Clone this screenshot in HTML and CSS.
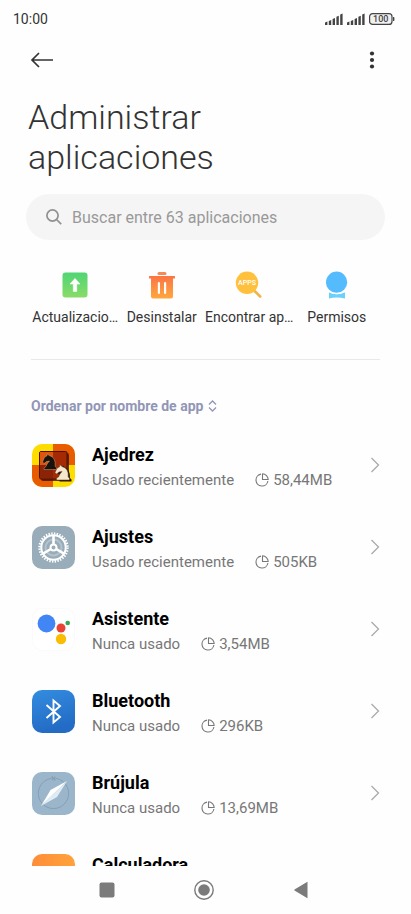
FILE: index.html
```html
<!DOCTYPE html>
<html lang="es">
<head>
<meta charset="utf-8">
<meta name="viewport" content="width=device-width, initial-scale=1">
<title>Administrar aplicaciones</title>
<link rel="stylesheet" href="styles.css">
</head>
<body>
<svg class="defs" width="0" height="0" aria-hidden="true">
  <symbol id="pie" viewBox="0 0 14 14"><path d="M6 1.1A6 6 0 1 0 12.900 8M7.500 .8V6.500H13.200A5.900 5.900 0 0 0 7.500 .8Z" fill="none" stroke="currentColor" stroke-width="1.100" stroke-linejoin="round"/></symbol>
  <symbol id="chevron" viewBox="0 0 10 16"><path d="M1.500 1L8.500 8L1.500 15" fill="none" stroke="currentColor" stroke-width="1.300"/></symbol>
  <symbol id="signal" viewBox="0 0 18 12"><path d="M0 9.500L2.400 8.500V12H0ZM3.800 8L6.200 7V12H3.800ZM7.600 6L10 5V12H7.600ZM11.400 3.800L13.800 2.800V12H11.400ZM15.200 1.400L17.600 .4V12H15.200Z" fill="#444"/></symbol>
</svg>

<header class="status">
  <span class="time">10:00</span>
  <span class="indicators">
    <svg class="signal"><use href="#signal"/></svg>
    <svg class="signal"><use href="#signal"/></svg>
    <svg class="battery" viewBox="0 0 26 12"><rect x=".6" y=".6" width="22.400" height="10.800" rx="3" fill="#f1f1f1" stroke="#444" stroke-width="1.200"/><path d="M24 4h.6q.8 0 .8 .8v2.400q0 .8-.8 .8H24Z" fill="#444"/><text x="11.800" y="9" text-anchor="middle">100</text></svg>
  </span>
</header>

<main class="page">
  <nav class="toolbar">
    <button class="tool" aria-label="Atrás"><svg width="24" height="18" viewBox="0 0 24 18"><path d="M9 2L2 9L9 16M2 9H23" fill="none" stroke="#333" stroke-width="1.700"/></svg></button>
    <button class="tool" aria-label="Más opciones"><svg width="6" height="18" viewBox="0 0 6 18" fill="#333"><circle cx="3" cy="2.500" r="2.100"/><circle cx="3" cy="9" r="2.100"/><circle cx="3" cy="15.500" r="2.100"/></svg></button>
  </nav>

  <h1 class="title">Administrar aplicaciones</h1>

  <label class="search">
    <svg width="16" height="16" viewBox="0 0 16 16" fill="none" stroke="#919191" stroke-width="1.700"><circle cx="6.500" cy="6.500" r="5.600"/><path d="M10.500 10.500L15.200 15.200"/></svg>
    <input type="search" placeholder="Buscar entre 63 aplicaciones" aria-label="Buscar aplicaciones">
  </label>

  <section class="shortcuts">
    <button class="shortcut">
      <svg viewBox="0 0 28 28"><defs><linearGradient id="g1" x2="0" y2="1"><stop stop-color="#50d575"/><stop offset="1" stop-color="#88dc68"/></linearGradient></defs><rect x="1.500" y="1.500" width="25" height="25" rx="3" fill="url(#g1)"/><path d="M14 7.500L19 13H15.700V20.500H12.300V13H9Z" fill="#fff" stroke="#fff" stroke-width=".6" stroke-linejoin="round"/></svg>
      <span>Actualizacio…</span>
    </button>
    <button class="shortcut">
      <svg viewBox="0 0 28 28"><defs><linearGradient id="g2" x2="0" y2="1"><stop stop-color="#fb7543"/><stop offset="1" stop-color="#ffa740"/></linearGradient></defs><rect x="9.500" y="1" width="9" height="3" rx="1.500" fill="#f58a55"/><path d="M1.500 5H26.500Q27 5 27 5.500V7.600H25V25.500Q25 27.500 23 27.500H5Q3 27.500 3 25.500V7.600H1V5.500Q1 5 1.500 5Z" fill="url(#g2)"/><path d="M10.900 12V22M17.100 12V22" stroke="#fff" stroke-width="2.200" stroke-linecap="round"/></svg>
      <span>Desinstalar</span>
    </button>
    <button class="shortcut">
      <svg viewBox="0 0 28 28"><path d="M19 19.500L25.200 25.500" stroke="#f0b548" stroke-width="2.600" stroke-linecap="round"/><circle cx="12" cy="11.800" r="11.200" fill="#ffc13d"/><text class="apps" x="12" y="14" text-anchor="middle">APPS</text></svg>
      <span>Encontrar ap…</span>
    </button>
    <button class="shortcut">
      <svg viewBox="0 0 28 28"><path d="M6 21.500Q14 25 22 21.500V27.500Q14 25.500 6 27.500Z" fill="#6bd0fa"/><circle cx="13.600" cy="11.200" r="12" fill="#fff"/><circle cx="13.600" cy="11.200" r="10.600" fill="#54bbff"/></svg>
      <span>Permisos</span>
    </button>
  </section>

  <button class="sort">Ordenar por nombre de app <svg width="9" height="12" viewBox="0 0 9 12"><path d="M1 4.500L4.500 1L8 4.500M1 7.500L4.500 11L8 7.500" fill="none" stroke="currentColor" stroke-width="1.300"/></svg></button>

  <ul class="apps-list">
    <li><a class="app" href="#">
      <svg class="icon" viewBox="0 0 43 43"><defs><clipPath id="r"><rect width="43" height="43" rx="10"/></clipPath></defs><g clip-path="url(#r)"><path fill="#fddc00" d="M0 0H43V43H0Z"/><path fill="#e95b00" d="M21 0H43V21H21ZM0 21H21V43H0Z"/></g><rect x="9" y="9" width="28" height="28" rx="2" fill="#421000" opacity=".8"/><rect x="7.500" y="7.500" width="27.500" height="27.500" rx="1.500" fill="#a32a05" stroke="#481400"/><path d="M8 8H21V21H8Z" fill="#df5410"/><path d="M8 21H21V34H8Z" fill="#8b2407"/><path d="M12 25.500V23.800L14 22.500Q14.500 20 17.500 17L14.500 17.500L12 19.500L10.500 18L12.500 13.300L15 11.800L15.300 10L17.200 11.500Q24 13 23.200 22.500L24.500 23.800V25.500Z" fill="#17120e" stroke="#eac48e" stroke-width=".4"/><path d="M26.500 36.500V34.500L28 33Q28.500 30.500 31.500 27.500L29 28L26.500 30L25 28.500L27 24.200L29.500 22.500L30 20.500L32 22.500Q37.500 25 37 33L38.500 34.500V36.500Z" fill="#2a1609" transform="translate(1 1)"/><path d="M24.500 36V34.300L26.500 33Q27.500 30 30 27.500L27 28L24.500 30L23 28.500L25 24.200L27.500 22.800L27.800 20.500L29.800 22.500Q37 24 36.200 33L37.500 34.300V36Z" fill="#f5e8cf" stroke="#55371d" stroke-width=".5"/></svg>
      <span class="info"><strong>Ajedrez</strong><span class="meta"><span>Usado recientemente</span><span class="size"><svg><use href="#pie"/></svg>58,44MB</span></span></span>
      <svg class="chevron"><use href="#chevron"/></svg></a></li>
    <li><a class="app" href="#">
      <svg class="icon" viewBox="0 0 43 43"><rect width="43" height="43" rx="10" fill="#98acb9"/><circle cx="21.500" cy="21.500" r="8" fill="none" stroke="#b5c3cc" stroke-width="2"/><g fill="none" stroke="#fff"><circle cx="21.500" cy="21.500" r="14" stroke-width="2.400" stroke-dasharray="1.400 1.350"/><circle cx="21.500" cy="21.500" r="12.200" stroke-width="2"/><circle cx="21.500" cy="21.500" r="3" stroke-width="2"/><path d="M21.500 18.500V9.500M18.900 23L11 27.600M24.100 23L32 27.600" stroke-width="2.600"/></g></svg>
      <span class="info"><strong>Ajustes</strong><span class="meta"><span>Usado recientemente</span><span class="size"><svg><use href="#pie"/></svg>505KB</span></span></span>
      <svg class="chevron"><use href="#chevron"/></svg></a></li>
    <li><a class="app" href="#">
      <svg class="icon" viewBox="0 0 43 43"><rect x=".5" y=".5" width="42" height="42" rx="10" fill="#fff" stroke="#fafafa"/><circle cx="14.500" cy="15.500" r="8.900" fill="#4285f4"/><circle cx="29" cy="20" r="4.500" fill="#ea4335"/><circle cx="35.700" cy="15" r="2.300" fill="#34a853"/><circle cx="29" cy="31" r="5.200" fill="#fbbc04"/></svg>
      <span class="info"><strong>Asistente</strong><span class="meta"><span>Nunca usado</span><span class="size"><svg><use href="#pie"/></svg>3,54MB</span></span></span>
      <svg class="chevron"><use href="#chevron"/></svg></a></li>
    <li><a class="app" href="#">
      <svg class="icon" viewBox="0 0 43 43"><defs><linearGradient id="g3" x2=".3" y2="1"><stop stop-color="#338ddf"/><stop offset="1" stop-color="#236bc5"/></linearGradient></defs><rect width="43" height="43" rx="10" fill="url(#g3)"/><path d="M14.500 15L28 27L21.500 32.500V10.500L28 16L14.500 28" fill="none" stroke="#fff" stroke-width="1.900"/></svg>
      <span class="info"><strong>Bluetooth</strong><span class="meta"><span>Nunca usado</span><span class="size"><svg><use href="#pie"/></svg>296KB</span></span></span>
      <svg class="chevron"><use href="#chevron"/></svg></a></li>
    <li><a class="app" href="#">
      <svg class="icon" viewBox="0 0 43 43"><rect width="43" height="43" rx="10" fill="#9bb5ca"/><path d="M24 6.400A15.200 15.200 0 1 1 19 6.400" fill="none" stroke="#809db4" stroke-width=".9"/><path d="M20.200 8.300V4.500L22.800 8.300V4.500" fill="none" stroke="#7893ac" stroke-width=".8"/><path d="M35 9L18.500 18L9 34Z" fill="#fff"/><path d="M35 9L25 25L9 34Z" fill="#dfecf5"/></svg>
      <span class="info"><strong>Brújula</strong><span class="meta"><span>Nunca usado</span><span class="size"><svg><use href="#pie"/></svg>13,69MB</span></span></span>
      <svg class="chevron"><use href="#chevron"/></svg></a></li>
    <li><a class="app" href="#">
      <svg class="icon" viewBox="0 0 43 43"><defs><linearGradient id="g4"><stop stop-color="#ff8d39"/><stop offset="1" stop-color="#ffa33b"/></linearGradient></defs><rect width="43" height="43" rx="10" fill="url(#g4)"/></svg>
      <span class="info"><strong>Calculadora</strong></span></a></li>
  </ul>
</main>

<footer class="navbar">
  <button aria-label="Recientes"><svg width="16" height="16"><rect x=".5" y=".5" width="15" height="15" rx="2" fill="#7b7b7b"/></svg></button>
  <button aria-label="Inicio"><svg width="20" height="20"><circle cx="10" cy="10" r="9.200" fill="none" stroke="#7b7b7b" stroke-width="1.400"/><circle cx="10" cy="10" r="5.800" fill="#7b7b7b"/></svg></button>
  <button aria-label="Volver"><svg width="16" height="18"><path d="M14.500 1V17Q14.500 17.500 14 17L1.500 9.400Q1 9 1.500 8.600L14 1Q14.500 .5 14.500 1Z" fill="#7b7b7b"/></svg></button>
</footer>
</body>
</html>
```
FILE: styles.css
```css
* { box-sizing: border-box; }
body {
  margin: 0;
  height: 100vh;
  display: flex;
  flex-direction: column;
  overflow: hidden;
  background: #fefefe;
  color: #333;
  font-family: Roboto, "Noto Sans", sans-serif;
}
button { border: 0; padding: 0; background: none; font: inherit; color: inherit; }
svg { display: block; flex: none; }
.defs { position: absolute; }

.status {
  flex: none;
  height: 38px;
  padding: 0 16px 0 13px;
  display: flex;
  align-items: center;
  justify-content: space-between;
}
.time { font-size: 14px; }
.indicators { display: flex; align-items: center; gap: 4px; }
.signal { width: 18px; height: 12px; }
.battery { width: 26px; height: 12px; }
.battery text { font-size: 9px; font-weight: 500; fill: #444; }

.page { flex: 1; min-height: 0; overflow: hidden; }
.toolbar {
  height: 44px;
  padding: 0 28px 0 24px;
  display: flex;
  align-items: center;
  justify-content: space-between;
}
.tool { height: 40px; padding: 0 8px 0 6px; }
.title {
  margin: 15px 28px 17px;
  max-width: 240px;
  font-size: 34px;
  line-height: 40px;
  font-weight: 300;
}
.search {
  margin: 0 26px;
  height: 46px;
  padding: 0 20px;
  display: flex;
  align-items: center;
  gap: 10px;
  border-radius: 23px;
  background: #f5f5f5;
}
.search input {
  flex: 1;
  min-width: 0;
  border: 0;
  padding: 0;
  outline: 0;
  background: none;
  font: inherit;
  font-size: 16px;
}
.search input::placeholder { color: #999; opacity: 1; }

.shortcuts {
  margin: 0 31px;
  padding: 31px 0 33px 1px;
  display: grid;
  grid-template-columns: repeat(4, 1fr);
  border-bottom: 1px solid #e9e9e9;
}
.shortcut { display: flex; flex-direction: column; align-items: center; gap: 9px; }
.shortcut svg { width: 28px; height: 28px; }
.shortcut span { font-size: 14px; line-height: 18px; white-space: nowrap; }
.apps { font-size: 7px; font-weight: 500; fill: #fff; }

.sort {
  margin: 36px 31px 8px;
  height: 20px;
  display: flex;
  align-items: center;
  gap: 5px;
  color: #9196b6;
  font-size: 14px;
  font-weight: 700;
}

.apps-list { list-style: none; margin: 0; padding: 0; }
.app {
  height: 82px;
  padding: 0 31px 0 32px;
  display: flex;
  align-items: center;
  color: inherit;
  text-decoration: none;
}
.icon { width: 43px; height: 43px; }
.info { flex: 1; height: 46px; margin-left: 17px; }
.info strong { display: block; color: #000; font-size: 18px; line-height: 26px; font-weight: 700; }
.meta { display: flex; gap: 21px; color: #777; font-size: 15px; line-height: 24px; }
.size { display: flex; align-items: center; gap: 4px; }
.size svg { width: 14px; height: 14px; }
.chevron { width: 10px; height: 16px; color: #aaa; }

.navbar {
  flex: none;
  height: 48px;
  padding: 0 62px 0 58px;
  display: grid;
  grid-template-columns: repeat(3, 1fr);
}
.navbar button { display: flex; align-items: center; justify-content: center; }
```
